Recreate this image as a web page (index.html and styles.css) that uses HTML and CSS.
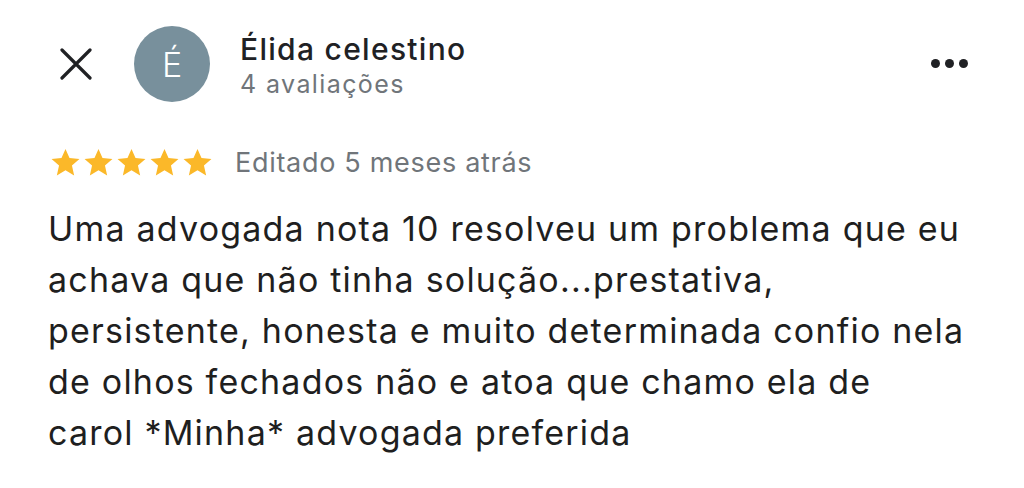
FILE: index.html
```html
<!DOCTYPE html>
<html lang="pt-BR">
<head>
    <meta charset="UTF-8">
    <meta name="viewport" content="width=device-width, initial-scale=1.0">
    <title>Avaliação</title>
    <link rel="stylesheet" href="styles.css">
</head>
<body>

    <!-- Cabeçalho do autor -->
    <div class="header">
        <button class="close-btn" aria-label="Fechar">
            <svg width="32" height="32" viewBox="0 0 32 32">
                <path d="M2 2 L30 30 M30 2 L2 30" stroke="#202124" stroke-width="3.2" stroke-linecap="round" fill="none"/>
            </svg>
        </button>
        <div class="avatar">É</div>
        <div class="author">
            <div class="author-name">Élida celestino</div>
            <div class="author-meta">4 avaliações</div>
        </div>
        <button class="more-btn" aria-label="Mais opções">
            <span class="dot"></span><span class="dot"></span><span class="dot"></span>
        </button>
    </div>

    <!-- Nota e data -->
    <div class="rating">
        <div class="stars">
            <svg viewBox="0 0 24 24"><path d="M12 1.5l3.1 7.1 7.7.7-5.8 5.1 1.7 7.6L12 18l-6.7 4 1.7-7.6-5.8-5.1 7.7-.7z"/></svg>
            <svg viewBox="0 0 24 24"><path d="M12 1.5l3.1 7.1 7.7.7-5.8 5.1 1.7 7.6L12 18l-6.7 4 1.7-7.6-5.8-5.1 7.7-.7z"/></svg>
            <svg viewBox="0 0 24 24"><path d="M12 1.5l3.1 7.1 7.7.7-5.8 5.1 1.7 7.6L12 18l-6.7 4 1.7-7.6-5.8-5.1 7.7-.7z"/></svg>
            <svg viewBox="0 0 24 24"><path d="M12 1.5l3.1 7.1 7.7.7-5.8 5.1 1.7 7.6L12 18l-6.7 4 1.7-7.6-5.8-5.1 7.7-.7z"/></svg>
            <svg viewBox="0 0 24 24"><path d="M12 1.5l3.1 7.1 7.7.7-5.8 5.1 1.7 7.6L12 18l-6.7 4 1.7-7.6-5.8-5.1 7.7-.7z"/></svg>
        </div>
        <span class="date">Editado 5 meses atrás</span>
    </div>

    <!-- Texto da avaliação -->
    <p class="review">
        Uma advogada nota 10 resolveu um problema que eu<br>
        achava que não tinha solução...prestativa,<br>
        persistente, honesta e muito determinada confio nela<br>
        de olhos fechados não e atoa que chamo ela de<br>
        carol *Minha* advogada preferida
    </p>

</body>
</html>
```

FILE: styles.css
```css
body {
    margin: 0;
    background: #fff;
    font-family: Inter, "Noto Sans", sans-serif;
    color: #202124;
}
button {
    background: none;
    border: none;
    padding: 0;
    cursor: pointer;
}
.header {
    display: flex;
    align-items: center;
    padding: 26px 56px 0 60px;
}
.close-btn {
    width: 32px;
    height: 32px;
    margin-right: 42px;
}
.close-btn svg {
    display: block;
}
.avatar {
    width: 76px;
    height: 76px;
    border-radius: 50%;
    background-color: #78909c;
    color: #fff;
    font-size: 34px;
    font-weight: 300;
    display: flex;
    align-items: center;
    justify-content: center;
    margin-right: 30px;
}
.author {
    flex: 1;
    padding-top: 6px;
}
.author-name {
    font-size: 30px;
    font-weight: 500;
    letter-spacing: 1.3px;
    line-height: 34px;
}
.author-meta {
    font-size: 25px;
    letter-spacing: 1.4px;
    line-height: 36px;
    color: #70757a;
}
.more-btn {
    display: flex;
    gap: 5px;
    margin-top: -2px;
}
.dot {
    width: 9px;
    height: 9px;
    border-radius: 50%;
    background: #202124;
}
.rating {
    display: flex;
    align-items: center;
    padding: 44px 0 0 50px;
}
.stars {
    display: flex;
    gap: 2px;
    margin-right: 22px;
}
.stars svg {
    width: 31px;
    height: 31px;
    fill: #fbb829;
}
.date {
    font-size: 27px;
    letter-spacing: 0.7px;
    color: #70757a;
}
.review {
    margin: 24px 0 0 48px;
    font-size: 34px;
    letter-spacing: 1.2px;
    line-height: 51px;
    color: #1f1f1f;
}
```
